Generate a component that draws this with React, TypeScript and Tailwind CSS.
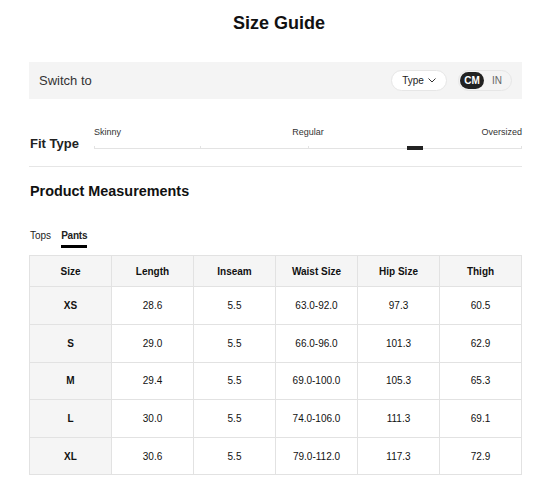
import React from "react";

const rows = [
  ["XS", "28.6", "5.5", "63.0-92.0", "97.3", "60.5"],
  ["S", "29.0", "5.5", "66.0-96.0", "101.3", "62.9"],
  ["M", "29.4", "5.5", "69.0-100.0", "105.3", "65.3"],
  ["L", "30.0", "5.5", "74.0-106.0", "111.3", "69.1"],
  ["XL", "30.6", "5.5", "79.0-112.0", "117.3", "72.9"],
];
const heads = ["Size", "Length", "Inseam", "Waist Size", "Hip Size", "Thigh"];

export default function App() {
  return (
    <div className="w-[551px] h-[483px] bg-white text-[#222] px-[29px]" style={{ fontFamily: '"Liberation Sans", Arial, sans-serif' }}>
      <div className="h-[44px] flex items-center justify-center pt-[2px] pl-[7px]">
        <h1 className="text-[18px] font-bold text-[#111]">Size Guide</h1>
      </div>
      <div className="mt-[18px] h-[37px] bg-[#f4f4f4] flex items-center pl-[10px] pr-[10px]">
        <span className="text-[13px] text-[#333]">Switch to</span>
        <div className="ml-auto flex items-center gap-[11px]">
          <div className="h-[21px] w-[56px] rounded-full bg-white border border-[#e6e6e6] flex items-center justify-center gap-[4px] text-[10px] text-[#222]">
            <span>Type</span>
            <svg width="8" height="5" viewBox="0 0 8 5" fill="none" stroke="#333" strokeWidth="1"><path d="M0.5 0.5 L4 4 L7.5 0.5" /></svg>
          </div>
          <div className="h-[21px] w-[54px] rounded-full bg-[#f4f4f4] border border-[#e6e6e6] flex items-center px-[1px]">
            <div className="h-[17px] w-[24px] rounded-full bg-[#222] text-white text-[10px] font-bold flex items-center justify-center">CM</div>
            <div className="flex-1 text-center text-[10px] text-[#666]">IN</div>
          </div>
        </div>
      </div>
      <div className="mt-[26px] flex items-end h-[25px]">
        <div className="w-[65px] text-[13px] font-semibold text-[#222] leading-none pl-[1px]">Fit Type</div>
        <div className="flex-1 flex flex-col">
          <div className="grid grid-cols-3 text-[9px] text-[#333] leading-none">
            <span className="text-left">Skinny</span>
            <span className="text-center">Regular</span>
            <span className="text-right">Oversized</span>
          </div>
          <div className="relative mt-[7px] h-[6px]">
            <div className="absolute left-0 right-0 bottom-[1px] h-px bg-[#e3e3e3]" />
            <div className="absolute left-0 bottom-[1px] w-px h-[3px] bg-[#e3e3e3]" />
            <div className="absolute left-[106px] bottom-[1px] w-px h-[3px] bg-[#e3e3e3]" />
            <div className="absolute left-[214px] bottom-[1px] w-px h-[3px] bg-[#e3e3e3]" />
            <div className="absolute right-0 bottom-[1px] w-px h-[3px] bg-[#e3e3e3]" />
            <div className="absolute left-[313px] bottom-0 w-[16px] h-[4px] bg-[#222]" />
          </div>
        </div>
      </div>
      <div className="mt-[16px] h-px bg-[#e6e6e6]" />
      <h2 className="mt-[17px] text-[14.4px] font-bold text-[#111] leading-none pl-[1px]">Product Measurements</h2>
      <div className="mt-[33px] flex items-start gap-[10px] text-[10px] text-[#222] leading-none">
        <span className="pl-[1px]">Tops</span>
        <div className="flex flex-col">
          <span className="font-bold tracking-[-0.2px]">Pants</span>
          <div className="mt-[4px] h-[3px] bg-black" />
        </div>
      </div>
      <table className="mt-[7px] w-full border-collapse table-fixed text-[10px] text-[#111]">
        <thead>
          <tr className="h-[31px] bg-[#f5f5f5]">
            {heads.map((h) => (
              <th key={h} className="border border-[#e2e2e2] font-bold">{h}</th>
            ))}
          </tr>
        </thead>
        <tbody>
          {rows.map((r) => (
            <tr key={r[0]} className="h-[37.6px]">
              {r.map((c, i) => (
                <td key={i} className={"border border-[#e2e2e2] text-center " + (i === 0 ? "bg-[#f5f5f5] font-bold" : "")}>{c}</td>
              ))}
            </tr>
          ))}
        </tbody>
      </table>
    </div>
  );
}
